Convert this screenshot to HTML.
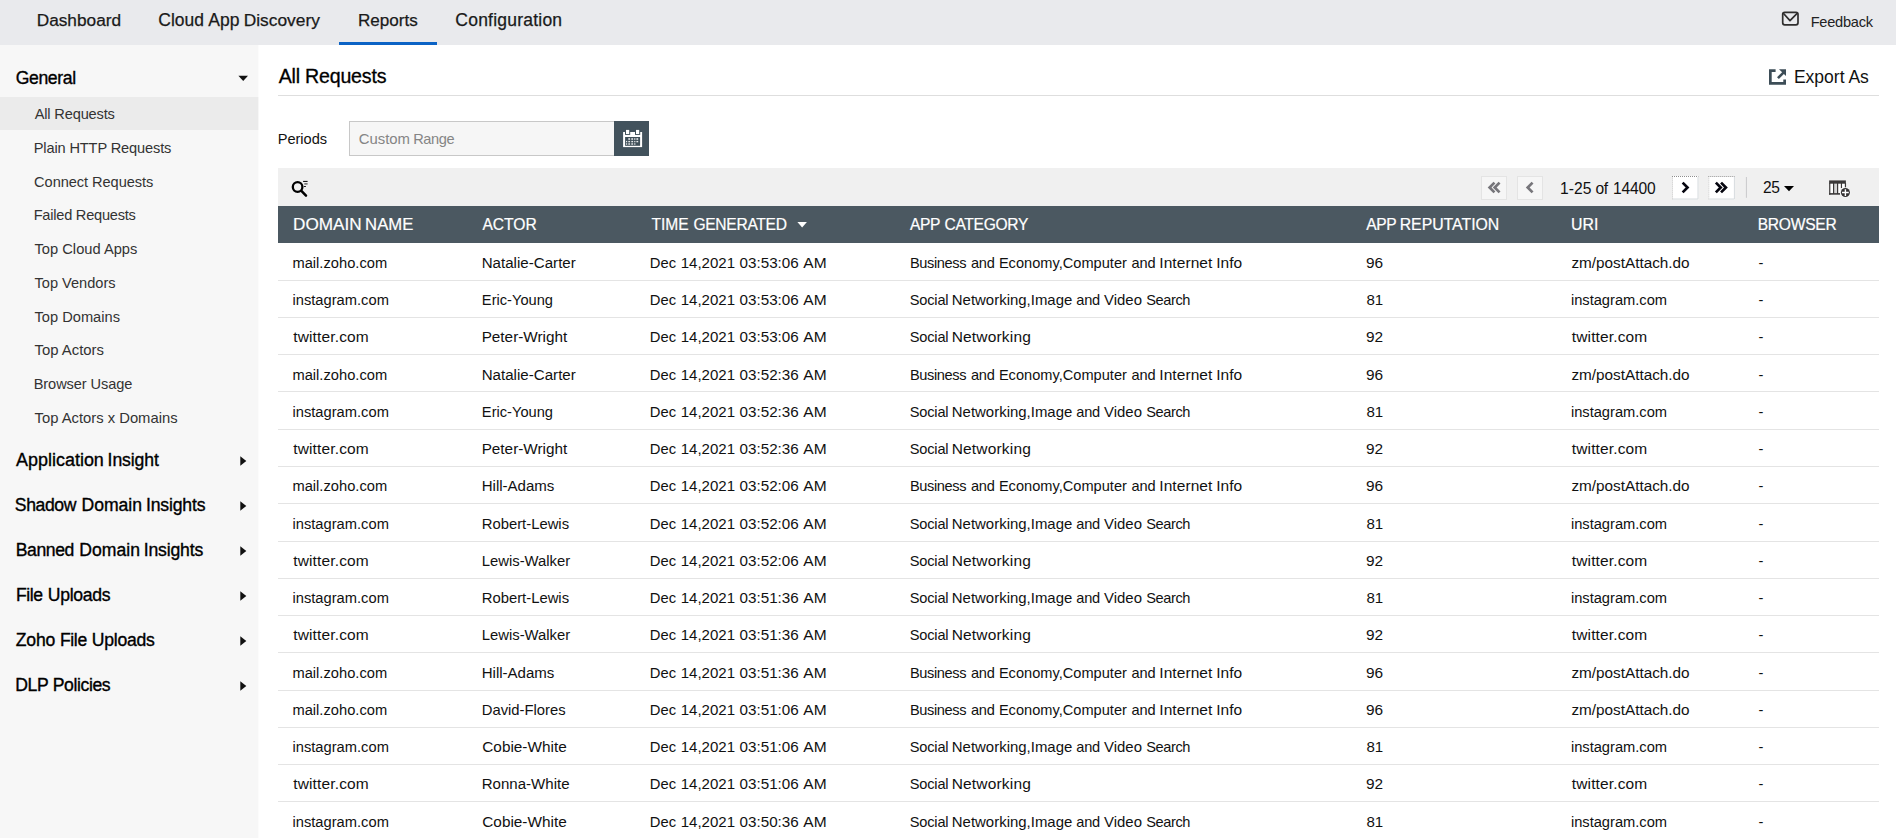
<!DOCTYPE html>
<html><head><meta charset="utf-8"><title>All Requests</title>
<style>
*{box-sizing:border-box;margin:0;padding:0}
html,body{width:1896px;height:838px;overflow:hidden;background:#fff;font-family:"Liberation Sans",sans-serif;color:#111}
body{position:relative}
.t{position:absolute;white-space:nowrap;line-height:20px;height:20px}
.abs{position:absolute}
#top{position:absolute;left:0;top:0;width:1896px;height:45px;background:#e9eaed}
#ul{position:absolute;left:339px;top:42px;width:98px;height:3px;background:#0b63c5}
#side{position:absolute;left:0;top:45px;width:258px;height:793px;background:#f7f7f7}
#sel{position:absolute;left:0;top:97px;width:258px;height:33px;background:#ebebeb}
#hr{position:absolute;left:278px;top:95px;width:1601px;height:1px;background:#dedede}
#tb{position:absolute;left:278px;top:168px;width:1601px;height:38px;background:#f0f0f0}
#th{position:absolute;left:278px;top:206px;width:1601px;height:37px;background:#4b5861}
.sep{position:absolute;left:278px;width:1601px;height:1px;background:#e4e4e4}
</style></head><body>
<div id="top"></div><div id="ul"></div>
<div id="side"></div>
<div id="sel"></div>
<div class="abs" style="left:258px;top:45px;width:1px;height:793px;background:#fcfcfc"></div>
<div class="abs" style="left:258px;top:97px;width:1px;height:33px;background:#f7f7f7"></div>
<div id="hr"></div>
<div class="abs" style="left:349px;top:121px;width:266px;height:35px;border:1px solid #c8c8c8;background:#f6f6f6"></div>
<div class="abs" style="left:614px;top:121px;width:35px;height:35px;background:#42525c"></div>
<div id="tb"></div>
<div id="th"></div>
<div class="sep" style="top:280px"></div>
<div class="sep" style="top:317px"></div>
<div class="sep" style="top:354px"></div>
<div class="sep" style="top:391px"></div>
<div class="sep" style="top:429px"></div>
<div class="sep" style="top:466px"></div>
<div class="sep" style="top:503px"></div>
<div class="sep" style="top:541px"></div>
<div class="sep" style="top:578px"></div>
<div class="sep" style="top:615px"></div>
<div class="sep" style="top:652px"></div>
<div class="sep" style="top:690px"></div>
<div class="sep" style="top:727px"></div>
<div class="sep" style="top:764px"></div>
<div class="sep" style="top:801px"></div>
<div class="sep" style="top:839px"></div>
<svg class="abs" style="left:0;top:0" width="1896" height="838" viewBox="0 0 1896 838">
<!-- mail -->
<g fill="none" stroke="#2f2e2e" stroke-width="1.7" stroke-linejoin="round">
<rect x="1782.7" y="12.3" width="15.3" height="12.5" rx="2"/>
<polyline points="1783.3,13.2 1790,20.6 1797.4,13.2"/>
</g>
<!-- export -->
<g fill="#3d4d57">
<path d="M1775.6 69.2H1769V84.7H1786V79.6H1783.3V82H1771.7V71.9H1775.6Z"/>
<path d="M1779 69.2H1786V76Z"/>
<path d="M1777 77.3L1782.6 71.7L1784.4 73.5L1778.9 79.1Z"/>
</g>
<!-- calendar -->
<g>
<rect x="623.1" y="132" width="19" height="15.1" fill="#fff"/>
<rect x="625" y="129.3" width="5.2" height="5.6" fill="#3f4f58"/>
<rect x="635" y="129.3" width="5.2" height="5.6" fill="#3f4f58"/>
<rect x="626" y="129.9" width="3.2" height="4.1" fill="#fff"/>
<rect x="636" y="129.9" width="3.2" height="4.1" fill="#fff"/>
<rect x="625.1" y="137" width="15" height="8.8" fill="#3f4f58"/>
<g fill="#e8eaeb">
<rect x="628.3" y="138.2" width="1.8" height="1.6"/><rect x="631.3" y="138.2" width="1.8" height="1.6"/><rect x="634.2" y="138.2" width="1.2" height="1.6"/><rect x="636.4" y="138.2" width="1.8" height="1.6"/>
<rect x="626" y="140.9" width="1.2" height="1.4"/><rect x="628.3" y="140.9" width="1.8" height="1.4"/><rect x="631.3" y="140.9" width="1.8" height="1.4"/><rect x="634.2" y="140.9" width="1.2" height="1.4"/><rect x="636.4" y="140.9" width="1.8" height="1.4"/>
<rect x="626" y="143.3" width="1.2" height="1.4"/><rect x="628.3" y="143.3" width="1.8" height="1.4"/><rect x="631.3" y="143.3" width="1.8" height="1.4"/><rect x="634.2" y="143.3" width="1.2" height="1.4"/>
</g>
</g>
<!-- search -->
<g fill="none" stroke="#000">
<circle cx="297.6" cy="187" r="4.8" stroke-width="2.3"/>
<path d="M301.4 190.9L306 195.7" stroke-width="2.5" stroke-linecap="round"/>
<path d="M303.1 181.4H307.6" stroke-width="1"/>
<path d="M304.3 183.9H307.6" stroke-width="1.3" stroke="#555"/>
<path d="M303.9 186.5H305.9" stroke-width="0.9"/>
</g>
<!-- pager buttons -->
<rect x="1481.5" y="176.5" width="25" height="23" fill="#f6f6f6" stroke="#e4e4e4" stroke-width="1"/>
<rect x="1517.5" y="176.5" width="25" height="23" fill="#f6f6f6" stroke="#e4e4e4" stroke-width="1"/>
<g fill="none" stroke="#77767b" stroke-width="2.7">
<path d="M1494.45 182.65L1489.6 187.5L1494.45 192.35"/>
<path d="M1499.55 182.65L1494.7 187.5L1499.55 192.35"/>
<path d="M1532.55 182.65L1527.7 187.5L1532.55 192.35"/>
</g>
<rect x="1672" y="176" width="26.4" height="23.4" fill="#fff"/>
<rect x="1708.3" y="176" width="26.6" height="23.4" fill="#fff"/>
<g fill="none" stroke-width="1">
<path d="M1672 176.5H1698.4" stroke="#8e8e8e" stroke-dasharray="1 1"/>
<path d="M1672.5 199.4V177" stroke="#c0c0c0" stroke-dasharray="1 1"/>
<path d="M1698 177V199H1673" stroke="#d6dbde"/>
<path d="M1708.3 176.5H1734.9" stroke="#8e8e8e" stroke-dasharray="1 1"/>
<path d="M1708.8 199.4V177" stroke="#c0c0c0" stroke-dasharray="1 1"/>
<path d="M1734.4 177V199H1709.3" stroke="#d6dbde"/>
</g>
<g fill="none" stroke="#05050f" stroke-width="2.7">
<path d="M1682.65 182.65L1687.5 187.5L1682.65 192.35"/>
<path d="M1715.85 182.65L1720.7 187.5L1715.85 192.35"/>
<path d="M1721.05 182.65L1725.9 187.5L1721.05 192.35"/>
</g>
<rect x="1745.9" y="177" width="1" height="20.8" fill="#c9c9cb"/>
<!-- caret -->
<path d="M1784 186H1794L1789 191.2Z" fill="#000"/>
<!-- columns icon -->
<g>
<rect x="1829.1" y="180.4" width="16.8" height="14.3" fill="#fff"/>
<rect x="1834" y="183.6" width="3.3" height="9.6" fill="#d6d6d6"/>
<rect x="1829.1" y="180.4" width="16.8" height="3.3" fill="#3a3838"/>
<path d="M1829.75 183V194.7M1833.6 183V194M1837.6 183V194M1841.45 183V188M1845.45 183V188" stroke="#3a3838" stroke-width="1.2"/>
<rect x="1829.1" y="193.1" width="11" height="1.6" fill="#3a3838"/>
<rect x="1840.2" y="188" width="6" height="7" fill="#f0f0f0"/>
<circle cx="1845.4" cy="192.55" r="5.3" fill="#f4f4f4"/>
<circle cx="1845.4" cy="192.55" r="4.5" fill="#333132"/>
<path d="M1842 192.55H1848.8M1845.4 189.15V195.95" stroke="#fff" stroke-width="1.4"/>
</g>
<!-- sidebar arrows -->
<path d="M238.4 75.8H248L243.2 81Z" fill="#111"/>
<path d="M240.3 456.15L246.3 460.90L240.3 465.65Z" fill="#111"/>
<path d="M240.3 501.15L246.3 505.90L240.3 510.65Z" fill="#111"/>
<path d="M240.3 546.15L246.3 550.90L240.3 555.65Z" fill="#111"/>
<path d="M240.3 591.15L246.3 595.90L240.3 600.65Z" fill="#111"/>
<path d="M240.3 636.15L246.3 640.90L240.3 645.65Z" fill="#111"/>
<path d="M240.3 681.15L246.3 685.90L240.3 690.65Z" fill="#111"/>
<!-- sort arrow -->
<path d="M797.4 222H806.9L802.15 227.6Z" fill="#fff"/>
</svg>

<span class="t" style="left:36.66px;top:10px;font-size:17.25px;color:#1a1a1a;letter-spacing:0.014px;-webkit-text-stroke:0.25px #1a1a1a;">Dashboard</span>
<span class="t" style="left:158.32px;top:10px;font-size:17.45px;color:#1a1a1a;-webkit-text-stroke:0.25px #1a1a1a;">Cloud </span>
<span class="t" style="left:208.32px;top:10px;font-size:17.5px;color:#1a1a1a;letter-spacing:-0.006px;-webkit-text-stroke:0.25px #1a1a1a;">App </span>
<span class="t" style="left:243.73px;top:10px;font-size:17.35px;color:#1a1a1a;letter-spacing:0.006px;-webkit-text-stroke:0.25px #1a1a1a;">Discovery</span>
<span class="t" style="left:357.98px;top:11px;font-size:17.1px;color:#1a1a1a;-webkit-text-stroke:0.25px #1a1a1a;">Reports</span>
<span class="t" style="left:455.36px;top:10px;font-size:17.5px;color:#1a1a1a;letter-spacing:0.219px;-webkit-text-stroke:0.25px #1a1a1a;">Configuration</span>
<span class="t" style="left:1810.70px;top:12px;font-size:14.6px;color:#222;letter-spacing:-0.256px;">Feedback</span>
<span class="t" style="left:15.72px;top:68px;font-size:17.6px;color:#000;letter-spacing:-0.374px;-webkit-text-stroke:0.35px #000;">General</span>
<span class="t" style="left:34.66px;top:104px;font-size:14.6px;color:#333;letter-spacing:-0.153px;">All Requests</span>
<span class="t" style="left:33.70px;top:138px;font-size:14.6px;color:#333;letter-spacing:-0.131px;">Plain HTTP Requests</span>
<span class="t" style="left:34.09px;top:172px;font-size:14.6px;color:#333;letter-spacing:-0.052px;">Connect Requests</span>
<span class="t" style="left:33.70px;top:205px;font-size:14.6px;color:#333;letter-spacing:-0.233px;">Failed Requests</span>
<span class="t" style="left:34.51px;top:239px;font-size:14.7px;color:#333;">Top Cloud Apps</span>
<span class="t" style="left:34.51px;top:273px;font-size:14.6px;color:#333;letter-spacing:-0.004px;">Top Vendors</span>
<span class="t" style="left:34.51px;top:307px;font-size:14.65px;color:#333;letter-spacing:0.006px;">Top Domains</span>
<span class="t" style="left:34.51px;top:340px;font-size:14.9px;color:#333;letter-spacing:-0.006px;">Top Actors</span>
<span class="t" style="left:33.70px;top:374px;font-size:14.6px;color:#333;letter-spacing:-0.085px;">Browser Usage</span>
<span class="t" style="left:34.51px;top:408px;font-size:14.8px;color:#333;">Top Actors x Domains</span>
<span class="t" style="left:16.09px;top:450px;font-size:17.95px;color:#000;-webkit-text-stroke:0.35px #000;">Application </span>
<span class="t" style="left:107.60px;top:450px;font-size:17.6px;color:#000;letter-spacing:-0.106px;-webkit-text-stroke:0.35px #000;">Insight</span>
<span class="t" style="left:14.83px;top:495px;font-size:17.6px;color:#000;letter-spacing:-0.400px;-webkit-text-stroke:0.35px #000;">Shadow </span>
<span class="t" style="left:81.46px;top:495px;font-size:17.6px;color:#000;letter-spacing:-0.028px;-webkit-text-stroke:0.35px #000;">Domain </span>
<span class="t" style="left:145.90px;top:495px;font-size:17.6px;color:#000;letter-spacing:-0.148px;-webkit-text-stroke:0.35px #000;">Insights</span>
<span class="t" style="left:15.73px;top:540px;font-size:17.6px;color:#000;letter-spacing:-0.400px;-webkit-text-stroke:0.35px #000;">Banned </span>
<span class="t" style="left:79.30px;top:540px;font-size:17.6px;color:#000;-webkit-text-stroke:0.35px #000;">Domain </span>
<span class="t" style="left:143.71px;top:540px;font-size:17.6px;color:#000;letter-spacing:-0.158px;-webkit-text-stroke:0.35px #000;">Insights</span>
<span class="t" style="left:15.89px;top:585px;font-size:17.6px;color:#000;letter-spacing:-0.366px;-webkit-text-stroke:0.35px #000;">File </span>
<span class="t" style="left:47.85px;top:585px;font-size:17.6px;color:#000;letter-spacing:-0.309px;-webkit-text-stroke:0.35px #000;">Uploads</span>
<span class="t" style="left:15.78px;top:630px;font-size:17.6px;color:#000;letter-spacing:-0.177px;-webkit-text-stroke:0.35px #000;">Zoho </span>
<span class="t" style="left:59.89px;top:630px;font-size:17.6px;color:#000;letter-spacing:-0.332px;-webkit-text-stroke:0.35px #000;">File </span>
<span class="t" style="left:91.85px;top:630px;font-size:17.6px;color:#000;letter-spacing:-0.268px;-webkit-text-stroke:0.35px #000;">Uploads</span>
<span class="t" style="left:15.27px;top:675px;font-size:17.6px;color:#000;letter-spacing:-0.400px;-webkit-text-stroke:0.35px #000;">DLP </span>
<span class="t" style="left:52.75px;top:675px;font-size:17.6px;color:#000;letter-spacing:-0.400px;-webkit-text-stroke:0.35px #000;">Policies</span>
<span class="t" style="left:278.63px;top:66px;font-size:19.6px;color:#000;letter-spacing:-0.198px;-webkit-text-stroke:0.3px #000;">All Requests</span>
<span class="t" style="left:1793.90px;top:67px;font-size:17.5px;color:#111;letter-spacing:0.007px;">Export As</span>
<span class="t" style="left:277.79px;top:129px;font-size:14.6px;color:#111;letter-spacing:-0.039px;">Periods</span>
<span class="t" style="left:358.67px;top:129px;font-size:14.9px;color:#858585;letter-spacing:0.008px;">Custom </span>
<span class="t" style="left:413.21px;top:129px;font-size:14.6px;color:#858585;letter-spacing:-0.400px;">Range</span>
<span class="t" style="left:1560.05px;top:179px;font-size:15.65px;color:#111;letter-spacing:0.006px;">1-25 </span>
<span class="t" style="left:1595.41px;top:179px;font-size:15.6px;color:#111;letter-spacing:-0.400px;">of </span>
<span class="t" style="left:1613.04px;top:179px;font-size:15.6px;color:#111;letter-spacing:-0.186px;">14400</span>
<span class="t" style="left:1763.06px;top:178px;font-size:15.6px;color:#111;letter-spacing:-0.400px;">25</span>
<span class="t" style="left:293.05px;top:214px;font-size:17.15px;color:#fff;letter-spacing:-0.019px;-webkit-text-stroke:0.2px #fff;">DOMAIN </span>
<span class="t" style="left:365.10px;top:215px;font-size:16.7px;color:#fff;-webkit-text-stroke:0.2px #fff;">NAME</span>
<span class="t" style="left:482.39px;top:215px;font-size:15.65px;color:#fff;letter-spacing:-0.015px;-webkit-text-stroke:0.2px #fff;">ACTOR</span>
<span class="t" style="left:651.61px;top:215px;font-size:15.6px;color:#fff;letter-spacing:-0.103px;-webkit-text-stroke:0.2px #fff;">TIME </span>
<span class="t" style="left:693.45px;top:215px;font-size:15.6px;color:#fff;letter-spacing:-0.300px;-webkit-text-stroke:0.2px #fff;">GENERATED</span>
<span class="t" style="left:909.94px;top:215px;font-size:15.6px;color:#fff;letter-spacing:-0.400px;-webkit-text-stroke:0.2px #fff;">APP </span>
<span class="t" style="left:944.44px;top:215px;font-size:15.6px;color:#fff;letter-spacing:-0.293px;-webkit-text-stroke:0.2px #fff;">CATEGORY</span>
<span class="t" style="left:1366.14px;top:215px;font-size:15.6px;color:#fff;letter-spacing:-0.400px;-webkit-text-stroke:0.2px #fff;">APP </span>
<span class="t" style="left:1399.65px;top:215px;font-size:15.85px;color:#fff;letter-spacing:-0.011px;-webkit-text-stroke:0.2px #fff;">REPUTATION</span>
<span class="t" style="left:1571.09px;top:215px;font-size:15.85px;color:#fff;-webkit-text-stroke:0.2px #fff;">URI</span>
<span class="t" style="left:1757.72px;top:215px;font-size:15.6px;color:#fff;letter-spacing:-0.255px;-webkit-text-stroke:0.2px #fff;">BROWSER</span>
<span class="t" style="left:292.44px;top:253px;font-size:14.7px;color:#111;">mail.zoho.com</span>
<span class="t" style="left:481.69px;top:253px;font-size:15.1px;color:#111;letter-spacing:0.012px;">Natalie-Carter</span>
<span class="t" style="left:649.80px;top:253px;font-size:14.75px;color:#111;letter-spacing:-0.010px;">Dec </span>
<span class="t" style="left:680.67px;top:253px;font-size:15.05px;color:#111;letter-spacing:0.011px;">14,2021 </span>
<span class="t" style="left:739.55px;top:253px;font-size:15.2px;color:#111;letter-spacing:0.012px;">03:53:06 </span>
<span class="t" style="left:803.21px;top:253px;font-size:15.5px;color:#111;letter-spacing:0.156px;">AM</span>
<span class="t" style="left:909.88px;top:253px;font-size:14.6px;color:#111;letter-spacing:-0.379px;">Business </span>
<span class="t" style="left:970.89px;top:253px;font-size:14.6px;color:#111;letter-spacing:-0.207px;">and </span>
<span class="t" style="left:998.89px;top:253px;font-size:14.6px;color:#111;letter-spacing:0.007px;">Economy,Computer </span>
<span class="t" style="left:1131.40px;top:253px;font-size:14.6px;color:#111;letter-spacing:-0.018px;">and </span>
<span class="t" style="left:1159.34px;top:253px;font-size:15.5px;color:#111;letter-spacing:0.057px;">Internet </span>
<span class="t" style="left:1216.21px;top:253px;font-size:15.5px;color:#111;letter-spacing:0.012px;">Info</span>
<span class="t" style="left:1365.99px;top:253px;font-size:15.4px;color:#111;letter-spacing:-0.011px;">96</span>
<span class="t" style="left:1571.41px;top:253px;font-size:15.3px;color:#111;">zm/postAttach.do</span>
<span class="t" style="left:1758.40px;top:253px;font-size:14.6px;color:#111;">-</span>
<span class="t" style="left:292.48px;top:290px;font-size:14.7px;color:#111;letter-spacing:0.008px;">instagram.com</span>
<span class="t" style="left:481.87px;top:290px;font-size:14.65px;color:#111;letter-spacing:0.005px;">Eric-Young</span>
<span class="t" style="left:649.80px;top:290px;font-size:14.75px;color:#111;letter-spacing:-0.010px;">Dec </span>
<span class="t" style="left:680.67px;top:290px;font-size:15.05px;color:#111;letter-spacing:0.011px;">14,2021 </span>
<span class="t" style="left:739.55px;top:290px;font-size:15.2px;color:#111;letter-spacing:0.012px;">03:53:06 </span>
<span class="t" style="left:803.21px;top:290px;font-size:15.5px;color:#111;letter-spacing:0.156px;">AM</span>
<span class="t" style="left:909.81px;top:290px;font-size:14.6px;color:#111;letter-spacing:-0.199px;">Social </span>
<span class="t" style="left:951.82px;top:290px;font-size:14.95px;color:#111;letter-spacing:0.005px;">Networking,Image </span>
<span class="t" style="left:1076.16px;top:290px;font-size:14.6px;color:#111;letter-spacing:-0.143px;">and </span>
<span class="t" style="left:1104.07px;top:290px;font-size:14.95px;color:#111;letter-spacing:-0.007px;">Video </span>
<span class="t" style="left:1146.21px;top:290px;font-size:14.6px;color:#111;letter-spacing:-0.400px;">Search</span>
<span class="t" style="left:1366.38px;top:290px;font-size:15.05px;color:#111;letter-spacing:0.005px;">81</span>
<span class="t" style="left:1570.92px;top:290px;font-size:14.7px;color:#111;letter-spacing:-0.013px;">instagram.com</span>
<span class="t" style="left:1758.40px;top:290px;font-size:14.6px;color:#111;">-</span>
<span class="t" style="left:293.24px;top:327px;font-size:15.5px;color:#111;letter-spacing:0.144px;">twitter.com</span>
<span class="t" style="left:481.63px;top:327px;font-size:15.3px;color:#111;letter-spacing:0.011px;">Peter-Wright</span>
<span class="t" style="left:649.80px;top:327px;font-size:14.75px;color:#111;letter-spacing:-0.010px;">Dec </span>
<span class="t" style="left:680.67px;top:327px;font-size:15.05px;color:#111;letter-spacing:0.011px;">14,2021 </span>
<span class="t" style="left:739.55px;top:327px;font-size:15.2px;color:#111;letter-spacing:0.012px;">03:53:06 </span>
<span class="t" style="left:803.21px;top:327px;font-size:15.5px;color:#111;letter-spacing:0.156px;">AM</span>
<span class="t" style="left:909.81px;top:327px;font-size:14.6px;color:#111;letter-spacing:-0.199px;">Social </span>
<span class="t" style="left:951.68px;top:327px;font-size:15.5px;color:#111;letter-spacing:0.184px;">Networking</span>
<span class="t" style="left:1365.98px;top:327px;font-size:15.4px;color:#111;">92</span>
<span class="t" style="left:1571.81px;top:327px;font-size:15.5px;color:#111;letter-spacing:0.136px;">twitter.com</span>
<span class="t" style="left:1758.40px;top:327px;font-size:14.6px;color:#111;">-</span>
<span class="t" style="left:292.44px;top:365px;font-size:14.7px;color:#111;">mail.zoho.com</span>
<span class="t" style="left:481.69px;top:365px;font-size:15.1px;color:#111;letter-spacing:0.012px;">Natalie-Carter</span>
<span class="t" style="left:649.80px;top:365px;font-size:14.75px;color:#111;letter-spacing:-0.010px;">Dec </span>
<span class="t" style="left:680.67px;top:365px;font-size:15.05px;color:#111;letter-spacing:0.011px;">14,2021 </span>
<span class="t" style="left:739.55px;top:365px;font-size:15.2px;color:#111;letter-spacing:0.012px;">03:52:36 </span>
<span class="t" style="left:803.21px;top:365px;font-size:15.5px;color:#111;letter-spacing:0.156px;">AM</span>
<span class="t" style="left:909.88px;top:365px;font-size:14.6px;color:#111;letter-spacing:-0.379px;">Business </span>
<span class="t" style="left:970.89px;top:365px;font-size:14.6px;color:#111;letter-spacing:-0.207px;">and </span>
<span class="t" style="left:998.89px;top:365px;font-size:14.6px;color:#111;letter-spacing:0.007px;">Economy,Computer </span>
<span class="t" style="left:1131.40px;top:365px;font-size:14.6px;color:#111;letter-spacing:-0.018px;">and </span>
<span class="t" style="left:1159.34px;top:365px;font-size:15.5px;color:#111;letter-spacing:0.057px;">Internet </span>
<span class="t" style="left:1216.21px;top:365px;font-size:15.5px;color:#111;letter-spacing:0.012px;">Info</span>
<span class="t" style="left:1365.99px;top:365px;font-size:15.4px;color:#111;letter-spacing:-0.011px;">96</span>
<span class="t" style="left:1571.41px;top:365px;font-size:15.3px;color:#111;">zm/postAttach.do</span>
<span class="t" style="left:1758.40px;top:365px;font-size:14.6px;color:#111;">-</span>
<span class="t" style="left:292.48px;top:402px;font-size:14.7px;color:#111;letter-spacing:0.008px;">instagram.com</span>
<span class="t" style="left:481.87px;top:402px;font-size:14.65px;color:#111;letter-spacing:0.005px;">Eric-Young</span>
<span class="t" style="left:649.80px;top:402px;font-size:14.75px;color:#111;letter-spacing:-0.010px;">Dec </span>
<span class="t" style="left:680.67px;top:402px;font-size:15.05px;color:#111;letter-spacing:0.011px;">14,2021 </span>
<span class="t" style="left:739.55px;top:402px;font-size:15.2px;color:#111;letter-spacing:0.012px;">03:52:36 </span>
<span class="t" style="left:803.21px;top:402px;font-size:15.5px;color:#111;letter-spacing:0.156px;">AM</span>
<span class="t" style="left:909.81px;top:402px;font-size:14.6px;color:#111;letter-spacing:-0.199px;">Social </span>
<span class="t" style="left:951.82px;top:402px;font-size:14.95px;color:#111;letter-spacing:0.005px;">Networking,Image </span>
<span class="t" style="left:1076.16px;top:402px;font-size:14.6px;color:#111;letter-spacing:-0.143px;">and </span>
<span class="t" style="left:1104.07px;top:402px;font-size:14.95px;color:#111;letter-spacing:-0.007px;">Video </span>
<span class="t" style="left:1146.21px;top:402px;font-size:14.6px;color:#111;letter-spacing:-0.400px;">Search</span>
<span class="t" style="left:1366.38px;top:402px;font-size:15.05px;color:#111;letter-spacing:0.005px;">81</span>
<span class="t" style="left:1570.92px;top:402px;font-size:14.7px;color:#111;letter-spacing:-0.013px;">instagram.com</span>
<span class="t" style="left:1758.40px;top:402px;font-size:14.6px;color:#111;">-</span>
<span class="t" style="left:293.24px;top:439px;font-size:15.5px;color:#111;letter-spacing:0.144px;">twitter.com</span>
<span class="t" style="left:481.63px;top:439px;font-size:15.3px;color:#111;letter-spacing:0.011px;">Peter-Wright</span>
<span class="t" style="left:649.80px;top:439px;font-size:14.75px;color:#111;letter-spacing:-0.010px;">Dec </span>
<span class="t" style="left:680.67px;top:439px;font-size:15.05px;color:#111;letter-spacing:0.011px;">14,2021 </span>
<span class="t" style="left:739.55px;top:439px;font-size:15.2px;color:#111;letter-spacing:0.012px;">03:52:36 </span>
<span class="t" style="left:803.21px;top:439px;font-size:15.5px;color:#111;letter-spacing:0.156px;">AM</span>
<span class="t" style="left:909.81px;top:439px;font-size:14.6px;color:#111;letter-spacing:-0.199px;">Social </span>
<span class="t" style="left:951.68px;top:439px;font-size:15.5px;color:#111;letter-spacing:0.184px;">Networking</span>
<span class="t" style="left:1365.98px;top:439px;font-size:15.4px;color:#111;">92</span>
<span class="t" style="left:1571.81px;top:439px;font-size:15.5px;color:#111;letter-spacing:0.136px;">twitter.com</span>
<span class="t" style="left:1758.40px;top:439px;font-size:14.6px;color:#111;">-</span>
<span class="t" style="left:292.44px;top:476px;font-size:14.7px;color:#111;">mail.zoho.com</span>
<span class="t" style="left:481.70px;top:476px;font-size:15.05px;color:#111;letter-spacing:-0.006px;">Hill-Adams</span>
<span class="t" style="left:649.80px;top:476px;font-size:14.75px;color:#111;letter-spacing:-0.010px;">Dec </span>
<span class="t" style="left:680.67px;top:476px;font-size:15.05px;color:#111;letter-spacing:0.011px;">14,2021 </span>
<span class="t" style="left:739.55px;top:476px;font-size:15.2px;color:#111;letter-spacing:0.012px;">03:52:06 </span>
<span class="t" style="left:803.21px;top:476px;font-size:15.5px;color:#111;letter-spacing:0.156px;">AM</span>
<span class="t" style="left:909.88px;top:476px;font-size:14.6px;color:#111;letter-spacing:-0.379px;">Business </span>
<span class="t" style="left:970.89px;top:476px;font-size:14.6px;color:#111;letter-spacing:-0.207px;">and </span>
<span class="t" style="left:998.89px;top:476px;font-size:14.6px;color:#111;letter-spacing:0.007px;">Economy,Computer </span>
<span class="t" style="left:1131.40px;top:476px;font-size:14.6px;color:#111;letter-spacing:-0.018px;">and </span>
<span class="t" style="left:1159.34px;top:476px;font-size:15.5px;color:#111;letter-spacing:0.057px;">Internet </span>
<span class="t" style="left:1216.21px;top:476px;font-size:15.5px;color:#111;letter-spacing:0.012px;">Info</span>
<span class="t" style="left:1365.99px;top:476px;font-size:15.4px;color:#111;letter-spacing:-0.011px;">96</span>
<span class="t" style="left:1571.41px;top:476px;font-size:15.3px;color:#111;">zm/postAttach.do</span>
<span class="t" style="left:1758.40px;top:476px;font-size:14.6px;color:#111;">-</span>
<span class="t" style="left:292.48px;top:514px;font-size:14.7px;color:#111;letter-spacing:0.008px;">instagram.com</span>
<span class="t" style="left:481.73px;top:514px;font-size:14.85px;color:#111;letter-spacing:-0.009px;">Robert-Lewis</span>
<span class="t" style="left:649.80px;top:514px;font-size:14.75px;color:#111;letter-spacing:-0.010px;">Dec </span>
<span class="t" style="left:680.67px;top:514px;font-size:15.05px;color:#111;letter-spacing:0.011px;">14,2021 </span>
<span class="t" style="left:739.55px;top:514px;font-size:15.2px;color:#111;letter-spacing:0.012px;">03:52:06 </span>
<span class="t" style="left:803.21px;top:514px;font-size:15.5px;color:#111;letter-spacing:0.156px;">AM</span>
<span class="t" style="left:909.81px;top:514px;font-size:14.6px;color:#111;letter-spacing:-0.199px;">Social </span>
<span class="t" style="left:951.82px;top:514px;font-size:14.95px;color:#111;letter-spacing:0.005px;">Networking,Image </span>
<span class="t" style="left:1076.16px;top:514px;font-size:14.6px;color:#111;letter-spacing:-0.143px;">and </span>
<span class="t" style="left:1104.07px;top:514px;font-size:14.95px;color:#111;letter-spacing:-0.007px;">Video </span>
<span class="t" style="left:1146.21px;top:514px;font-size:14.6px;color:#111;letter-spacing:-0.400px;">Search</span>
<span class="t" style="left:1366.38px;top:514px;font-size:15.05px;color:#111;letter-spacing:0.005px;">81</span>
<span class="t" style="left:1570.92px;top:514px;font-size:14.7px;color:#111;letter-spacing:-0.013px;">instagram.com</span>
<span class="t" style="left:1758.40px;top:514px;font-size:14.6px;color:#111;">-</span>
<span class="t" style="left:293.24px;top:551px;font-size:15.5px;color:#111;letter-spacing:0.144px;">twitter.com</span>
<span class="t" style="left:481.73px;top:551px;font-size:14.85px;color:#111;">Lewis-Walker</span>
<span class="t" style="left:649.80px;top:551px;font-size:14.75px;color:#111;letter-spacing:-0.010px;">Dec </span>
<span class="t" style="left:680.67px;top:551px;font-size:15.05px;color:#111;letter-spacing:0.011px;">14,2021 </span>
<span class="t" style="left:739.55px;top:551px;font-size:15.2px;color:#111;letter-spacing:0.012px;">03:52:06 </span>
<span class="t" style="left:803.21px;top:551px;font-size:15.5px;color:#111;letter-spacing:0.156px;">AM</span>
<span class="t" style="left:909.81px;top:551px;font-size:14.6px;color:#111;letter-spacing:-0.199px;">Social </span>
<span class="t" style="left:951.68px;top:551px;font-size:15.5px;color:#111;letter-spacing:0.184px;">Networking</span>
<span class="t" style="left:1365.98px;top:551px;font-size:15.4px;color:#111;">92</span>
<span class="t" style="left:1571.81px;top:551px;font-size:15.5px;color:#111;letter-spacing:0.136px;">twitter.com</span>
<span class="t" style="left:1758.40px;top:551px;font-size:14.6px;color:#111;">-</span>
<span class="t" style="left:292.48px;top:588px;font-size:14.7px;color:#111;letter-spacing:0.008px;">instagram.com</span>
<span class="t" style="left:481.73px;top:588px;font-size:14.85px;color:#111;letter-spacing:-0.009px;">Robert-Lewis</span>
<span class="t" style="left:649.80px;top:588px;font-size:14.75px;color:#111;letter-spacing:-0.010px;">Dec </span>
<span class="t" style="left:680.67px;top:588px;font-size:15.05px;color:#111;letter-spacing:0.011px;">14,2021 </span>
<span class="t" style="left:739.55px;top:588px;font-size:15.2px;color:#111;letter-spacing:0.012px;">03:51:36 </span>
<span class="t" style="left:803.21px;top:588px;font-size:15.5px;color:#111;letter-spacing:0.156px;">AM</span>
<span class="t" style="left:909.81px;top:588px;font-size:14.6px;color:#111;letter-spacing:-0.199px;">Social </span>
<span class="t" style="left:951.82px;top:588px;font-size:14.95px;color:#111;letter-spacing:0.005px;">Networking,Image </span>
<span class="t" style="left:1076.16px;top:588px;font-size:14.6px;color:#111;letter-spacing:-0.143px;">and </span>
<span class="t" style="left:1104.07px;top:588px;font-size:14.95px;color:#111;letter-spacing:-0.007px;">Video </span>
<span class="t" style="left:1146.21px;top:588px;font-size:14.6px;color:#111;letter-spacing:-0.400px;">Search</span>
<span class="t" style="left:1366.38px;top:588px;font-size:15.05px;color:#111;letter-spacing:0.005px;">81</span>
<span class="t" style="left:1570.92px;top:588px;font-size:14.7px;color:#111;letter-spacing:-0.013px;">instagram.com</span>
<span class="t" style="left:1758.40px;top:588px;font-size:14.6px;color:#111;">-</span>
<span class="t" style="left:293.24px;top:625px;font-size:15.5px;color:#111;letter-spacing:0.144px;">twitter.com</span>
<span class="t" style="left:481.73px;top:625px;font-size:14.85px;color:#111;">Lewis-Walker</span>
<span class="t" style="left:649.80px;top:625px;font-size:14.75px;color:#111;letter-spacing:-0.010px;">Dec </span>
<span class="t" style="left:680.67px;top:625px;font-size:15.05px;color:#111;letter-spacing:0.011px;">14,2021 </span>
<span class="t" style="left:739.55px;top:625px;font-size:15.2px;color:#111;letter-spacing:0.012px;">03:51:36 </span>
<span class="t" style="left:803.21px;top:625px;font-size:15.5px;color:#111;letter-spacing:0.156px;">AM</span>
<span class="t" style="left:909.81px;top:625px;font-size:14.6px;color:#111;letter-spacing:-0.199px;">Social </span>
<span class="t" style="left:951.68px;top:625px;font-size:15.5px;color:#111;letter-spacing:0.184px;">Networking</span>
<span class="t" style="left:1365.98px;top:625px;font-size:15.4px;color:#111;">92</span>
<span class="t" style="left:1571.81px;top:625px;font-size:15.5px;color:#111;letter-spacing:0.136px;">twitter.com</span>
<span class="t" style="left:1758.40px;top:625px;font-size:14.6px;color:#111;">-</span>
<span class="t" style="left:292.44px;top:663px;font-size:14.7px;color:#111;">mail.zoho.com</span>
<span class="t" style="left:481.70px;top:663px;font-size:15.05px;color:#111;letter-spacing:-0.006px;">Hill-Adams</span>
<span class="t" style="left:649.80px;top:663px;font-size:14.75px;color:#111;letter-spacing:-0.010px;">Dec </span>
<span class="t" style="left:680.67px;top:663px;font-size:15.05px;color:#111;letter-spacing:0.011px;">14,2021 </span>
<span class="t" style="left:739.55px;top:663px;font-size:15.2px;color:#111;letter-spacing:0.012px;">03:51:36 </span>
<span class="t" style="left:803.21px;top:663px;font-size:15.5px;color:#111;letter-spacing:0.156px;">AM</span>
<span class="t" style="left:909.88px;top:663px;font-size:14.6px;color:#111;letter-spacing:-0.379px;">Business </span>
<span class="t" style="left:970.89px;top:663px;font-size:14.6px;color:#111;letter-spacing:-0.207px;">and </span>
<span class="t" style="left:998.89px;top:663px;font-size:14.6px;color:#111;letter-spacing:0.007px;">Economy,Computer </span>
<span class="t" style="left:1131.40px;top:663px;font-size:14.6px;color:#111;letter-spacing:-0.018px;">and </span>
<span class="t" style="left:1159.34px;top:663px;font-size:15.5px;color:#111;letter-spacing:0.057px;">Internet </span>
<span class="t" style="left:1216.21px;top:663px;font-size:15.5px;color:#111;letter-spacing:0.012px;">Info</span>
<span class="t" style="left:1365.99px;top:663px;font-size:15.4px;color:#111;letter-spacing:-0.011px;">96</span>
<span class="t" style="left:1571.41px;top:663px;font-size:15.3px;color:#111;">zm/postAttach.do</span>
<span class="t" style="left:1758.40px;top:663px;font-size:14.6px;color:#111;">-</span>
<span class="t" style="left:292.44px;top:700px;font-size:14.7px;color:#111;">mail.zoho.com</span>
<span class="t" style="left:481.73px;top:700px;font-size:14.8px;color:#111;">David-Flores</span>
<span class="t" style="left:649.80px;top:700px;font-size:14.75px;color:#111;letter-spacing:-0.010px;">Dec </span>
<span class="t" style="left:680.67px;top:700px;font-size:15.05px;color:#111;letter-spacing:0.011px;">14,2021 </span>
<span class="t" style="left:739.55px;top:700px;font-size:15.2px;color:#111;letter-spacing:0.012px;">03:51:06 </span>
<span class="t" style="left:803.21px;top:700px;font-size:15.5px;color:#111;letter-spacing:0.156px;">AM</span>
<span class="t" style="left:909.88px;top:700px;font-size:14.6px;color:#111;letter-spacing:-0.379px;">Business </span>
<span class="t" style="left:970.89px;top:700px;font-size:14.6px;color:#111;letter-spacing:-0.207px;">and </span>
<span class="t" style="left:998.89px;top:700px;font-size:14.6px;color:#111;letter-spacing:0.007px;">Economy,Computer </span>
<span class="t" style="left:1131.40px;top:700px;font-size:14.6px;color:#111;letter-spacing:-0.018px;">and </span>
<span class="t" style="left:1159.34px;top:700px;font-size:15.5px;color:#111;letter-spacing:0.057px;">Internet </span>
<span class="t" style="left:1216.21px;top:700px;font-size:15.5px;color:#111;letter-spacing:0.012px;">Info</span>
<span class="t" style="left:1365.99px;top:700px;font-size:15.4px;color:#111;letter-spacing:-0.011px;">96</span>
<span class="t" style="left:1571.41px;top:700px;font-size:15.3px;color:#111;">zm/postAttach.do</span>
<span class="t" style="left:1758.40px;top:700px;font-size:14.6px;color:#111;">-</span>
<span class="t" style="left:292.48px;top:737px;font-size:14.7px;color:#111;letter-spacing:0.008px;">instagram.com</span>
<span class="t" style="left:482.26px;top:737px;font-size:15.35px;color:#111;letter-spacing:0.006px;">Cobie-White</span>
<span class="t" style="left:649.80px;top:737px;font-size:14.75px;color:#111;letter-spacing:-0.010px;">Dec </span>
<span class="t" style="left:680.67px;top:737px;font-size:15.05px;color:#111;letter-spacing:0.011px;">14,2021 </span>
<span class="t" style="left:739.55px;top:737px;font-size:15.2px;color:#111;letter-spacing:0.012px;">03:51:06 </span>
<span class="t" style="left:803.21px;top:737px;font-size:15.5px;color:#111;letter-spacing:0.156px;">AM</span>
<span class="t" style="left:909.81px;top:737px;font-size:14.6px;color:#111;letter-spacing:-0.199px;">Social </span>
<span class="t" style="left:951.82px;top:737px;font-size:14.95px;color:#111;letter-spacing:0.005px;">Networking,Image </span>
<span class="t" style="left:1076.16px;top:737px;font-size:14.6px;color:#111;letter-spacing:-0.143px;">and </span>
<span class="t" style="left:1104.07px;top:737px;font-size:14.95px;color:#111;letter-spacing:-0.007px;">Video </span>
<span class="t" style="left:1146.21px;top:737px;font-size:14.6px;color:#111;letter-spacing:-0.400px;">Search</span>
<span class="t" style="left:1366.38px;top:737px;font-size:15.05px;color:#111;letter-spacing:0.005px;">81</span>
<span class="t" style="left:1570.92px;top:737px;font-size:14.7px;color:#111;letter-spacing:-0.013px;">instagram.com</span>
<span class="t" style="left:1758.40px;top:737px;font-size:14.6px;color:#111;">-</span>
<span class="t" style="left:293.24px;top:774px;font-size:15.5px;color:#111;letter-spacing:0.144px;">twitter.com</span>
<span class="t" style="left:481.70px;top:774px;font-size:15.05px;color:#111;letter-spacing:0.009px;">Ronna-White</span>
<span class="t" style="left:649.80px;top:774px;font-size:14.75px;color:#111;letter-spacing:-0.010px;">Dec </span>
<span class="t" style="left:680.67px;top:774px;font-size:15.05px;color:#111;letter-spacing:0.011px;">14,2021 </span>
<span class="t" style="left:739.55px;top:774px;font-size:15.2px;color:#111;letter-spacing:0.012px;">03:51:06 </span>
<span class="t" style="left:803.21px;top:774px;font-size:15.5px;color:#111;letter-spacing:0.156px;">AM</span>
<span class="t" style="left:909.81px;top:774px;font-size:14.6px;color:#111;letter-spacing:-0.199px;">Social </span>
<span class="t" style="left:951.68px;top:774px;font-size:15.5px;color:#111;letter-spacing:0.184px;">Networking</span>
<span class="t" style="left:1365.98px;top:774px;font-size:15.4px;color:#111;">92</span>
<span class="t" style="left:1571.81px;top:774px;font-size:15.5px;color:#111;letter-spacing:0.136px;">twitter.com</span>
<span class="t" style="left:1758.40px;top:774px;font-size:14.6px;color:#111;">-</span>
<span class="t" style="left:292.48px;top:812px;font-size:14.7px;color:#111;letter-spacing:0.008px;">instagram.com</span>
<span class="t" style="left:482.26px;top:812px;font-size:15.35px;color:#111;letter-spacing:0.006px;">Cobie-White</span>
<span class="t" style="left:649.80px;top:812px;font-size:14.75px;color:#111;letter-spacing:-0.010px;">Dec </span>
<span class="t" style="left:680.67px;top:812px;font-size:15.05px;color:#111;letter-spacing:0.011px;">14,2021 </span>
<span class="t" style="left:739.55px;top:812px;font-size:15.2px;color:#111;letter-spacing:0.012px;">03:50:36 </span>
<span class="t" style="left:803.21px;top:812px;font-size:15.5px;color:#111;letter-spacing:0.156px;">AM</span>
<span class="t" style="left:909.81px;top:812px;font-size:14.6px;color:#111;letter-spacing:-0.199px;">Social </span>
<span class="t" style="left:951.82px;top:812px;font-size:14.95px;color:#111;letter-spacing:0.005px;">Networking,Image </span>
<span class="t" style="left:1076.16px;top:812px;font-size:14.6px;color:#111;letter-spacing:-0.143px;">and </span>
<span class="t" style="left:1104.07px;top:812px;font-size:14.95px;color:#111;letter-spacing:-0.007px;">Video </span>
<span class="t" style="left:1146.21px;top:812px;font-size:14.6px;color:#111;letter-spacing:-0.400px;">Search</span>
<span class="t" style="left:1366.38px;top:812px;font-size:15.05px;color:#111;letter-spacing:0.005px;">81</span>
<span class="t" style="left:1570.92px;top:812px;font-size:14.7px;color:#111;letter-spacing:-0.013px;">instagram.com</span>
<span class="t" style="left:1758.40px;top:812px;font-size:14.6px;color:#111;">-</span>
</body></html>
